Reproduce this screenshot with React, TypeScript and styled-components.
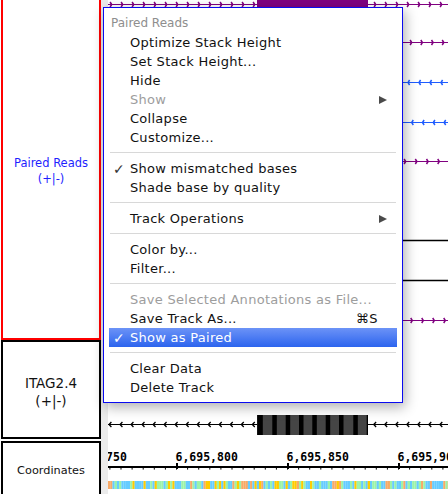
import styled, { createGlobalStyle } from "styled-components";

const GlobalStyle = createGlobalStyle`
  html, body {
    margin: 0;
    padding: 0;
    background: #fff;
    overflow: hidden;
  }
  body {
    font-family: "DejaVu Sans", "Liberation Sans", sans-serif;
  }
`;

const Screen = styled.div`
  position: relative;
  display: flex;
  width: 448px;
  height: 494px;
  overflow: hidden;
  background: #fff;
`;

const NamePanel = styled.div`
  display: flex;
  flex-direction: column;
  flex-shrink: 0;
  width: 100px;
  padding-left: 1px;
`;

const NameBox = styled.div<{ $color: string; $height: number; $open?: boolean; $gap?: number; $shift?: number }>`
  display: flex;
  flex-direction: column;
  align-items: center;
  justify-content: center;
  flex-shrink: 0;
  box-sizing: border-box;
  height: ${p => p.$height}px;
  margin-bottom: ${p => p.$gap ?? 0}px;
  padding-top: ${p => p.$shift ?? 0}px;
  border: 2px solid ${p => p.$color};
  border-top-width: ${p => (p.$open ? 0 : 2)}px;
`;

const TrackName = styled.div<{ $size: number; $color?: string; $lh: number }>`
  font-size: ${p => p.$size}px;
  line-height: ${p => p.$lh}px;
  color: ${p => p.$color ?? "#111"};
  text-align: center;
  white-space: nowrap;
`;

const Gutter = styled.div`
  flex-shrink: 0;
  width: 7px;
  background: #ebebeb;
`;

const DataPanel = styled.div`
  display: flex;
  flex-direction: column;
  flex: 1;
  overflow: hidden;
`;

const TrackCanvas = styled.svg<{ $h: number; $top?: number }>`
  display: block;
  flex-shrink: 0;
  width: 340px;
  height: ${p => p.$h}px;
  margin-top: ${p => p.$top ?? 0}px;
  overflow: hidden;
`;

const Menu = styled.div`
  position: absolute;
  left: 103px;
  top: 7px;
  width: 300px;
  box-sizing: border-box;
  padding: 6px 0 5px;
  border: 1px solid #0a0af0;
  background: #fff;
  box-shadow: 2px 4px 12px rgba(0, 0, 0, 0.32);
`;

const MenuHeader = styled.div`
  height: 19px;
  line-height: 19px;
  padding-left: 7px;
  font-size: 12px;
  color: #8e8e8e;
`;

const MenuItem = styled.div<{ $disabled?: boolean; $active?: boolean }>`
  display: flex;
  align-items: center;
  height: 19px;
  margin: 0 5px;
  padding-right: 10px;
  font-size: 13px;
  letter-spacing: 0.28px;
  white-space: nowrap;
  color: ${p => (p.$active ? "#fff" : p.$disabled ? "#9d9d9d" : "#111")};
  background: ${p => (p.$active ? "linear-gradient(#6c93f7, #2c64ee)" : "transparent")};
`;

const CheckSlot = styled.span<{ $active?: boolean }>`
  flex-shrink: 0;
  box-sizing: border-box;
  width: 21px;
  padding-left: 4px;
  font-size: 14px;
  font-weight: bold;
  color: ${p => (p.$active ? "#fff" : "#333")};
`;

const Shortcut = styled.span`
  margin-left: auto;
  margin-right: 9px;
  letter-spacing: 0.5px;
`;

const SubArrow = styled.span`
  margin-left: auto;
  width: 0;
  height: 0;
  border-left: 8px solid #4a4a4a;
  border-top: 4.5px solid transparent;
  border-bottom: 4.5px solid transparent;
`;

const Separator = styled.div`
  height: 1px;
  margin: 5px 6px 6px;
  background: #d8d8d8;
`;

type Entry =
  | { sep: true }
  | { label: string; check?: boolean; disabled?: boolean; sub?: boolean; key?: string; active?: boolean };

const entries: Entry[] = [
  { label: "Optimize Stack Height" },
  { label: "Set Stack Height..." },
  { label: "Hide" },
  { label: "Show", disabled: true, sub: true },
  { label: "Collapse" },
  { label: "Customize..." },
  { sep: true },
  { label: "Show mismatched bases", check: true },
  { label: "Shade base by quality" },
  { sep: true },
  { label: "Track Operations", sub: true },
  { sep: true },
  { label: "Color by..." },
  { label: "Filter..." },
  { sep: true },
  { label: "Save Selected Annotations as File...", disabled: true },
  { label: "Save Track As...", key: "⌘S" },
  { label: "Show as Paired", check: true, active: true },
  { sep: true },
  { label: "Clear Data" },
  { label: "Delete Track" },
];

const PURPLE = "#800080";
const BLUE = "#1f5cff";

type Read = { y: number; color: string; dir?: "left" | "right"; anchor?: number; step?: number };

const reads: Read[] = [
  { y: 4, color: PURPLE, dir: "right", anchor: 3.7, step: 11 },
  { y: 42, color: PURPLE, dir: "right", anchor: 303.7, step: 10.7 },
  { y: 82, color: BLUE, dir: "left", anchor: 300, step: 11 },
  { y: 122, color: BLUE, dir: "left", anchor: 303.7, step: 10.8 },
  { y: 161, color: PURPLE, dir: "right", anchor: 297.7, step: 11.2 },
  { y: 240, color: "#000" },
  { y: 280, color: "#000" },
  { y: 320, color: PURPLE, dir: "right", anchor: 304.3, step: 11 },
];

function chevronXs(anchor: number, step: number, width: number) {
  const xs: number[] = [];
  let x = anchor;
  while (x - step > 0) x -= step;
  for (; x < width + 4; x += step) xs.push(x);
  return xs;
}

function ArrowLine({ y, color, dir, anchor = 0, step = 11 }: Read) {
  return (
    <g>
      <line x1={0} x2={340} y1={y + 0.5} y2={y + 0.5} stroke={color} strokeWidth={dir ? 1 : 1.6} />
      {dir &&
        chevronXs(anchor, step, 340).map(x => {
          const d = dir === "right" ? -1.6 : 1.6;
          return (
            <polyline
              key={x}
              points={`${x + d},${y - 2} ${x},${y + 0.5} ${x + d},${y + 3}`}
              fill="none"
              stroke={color}
              strokeWidth={1.5}
            />
          );
        })}
    </g>
  );
}

// exon blocks of the gene (black edges over dark grey fill)
const exonEdges = [149.3, 164.3, 177.7, 191, 204.3, 217.7, 231, 245.3, 258.7];

const ticks = [-43, 68, 179, 290];
const labels = ["6,695,750", "6,695,800", "6,695,850", "6,695,900"];

const BASE_COLORS = ["#66ccff", "#9cf3a8", "#f7aa68", "#ffcc00"];
const sequence = (() => {
  let seed = 20240917;
  const out: string[] = [];
  for (let i = 0; i < 154; i++) {
    seed = (seed * 1103515245 + 12345) & 0x7fffffff;
    const r = (seed >> 8) % 100;
    out.push(r < 36 ? BASE_COLORS[0] : r < 66 ? BASE_COLORS[1] : r < 87 ? BASE_COLORS[2] : BASE_COLORS[3]);
  }
  return out;
})();

function App() {
  const minor: number[] = [];
  for (let x = -43; x < 345; x += 11.1) minor.push(x);

  return (
    <>
      <GlobalStyle />
      <Screen>
        <NamePanel>
          <NameBox $color="#ff0000" $height={340} $open $shift={4}>
            <TrackName $size={11.5} $lh={16} $color="#1f1fff">Paired Reads</TrackName>
            <TrackName $size={11.5} $lh={16} $color="#1f1fff">(+|-)</TrackName>
          </NameBox>
          <NameBox $color="#000" $height={99} $gap={2} $shift={4}>
            <TrackName $size={13.5} $lh={18}>ITAG2.4</TrackName>
            <TrackName $size={13.5} $lh={18}>(+|-)</TrackName>
          </NameBox>
          <NameBox $color="#000" $height={60}>
            <TrackName $size={11.3} $lh={16}>Coordinates</TrackName>
          </NameBox>
        </NamePanel>
        <Gutter />
        <DataPanel>
          <TrackCanvas $h={340} viewBox="0 0 340 340">
            {reads.map(r => (
              <ArrowLine key={r.y} {...r} />
            ))}
            <rect x={149} y={0} width={111} height={7} fill={PURPLE} />
          </TrackCanvas>
          <TrackCanvas $h={100} viewBox="0 0 340 100">
            <line x1={0} x2={340} y1={84.5} y2={84.5} stroke="#000" strokeWidth={1} />
            {chevronXs(1, 11.03, 340).map(x => (
              <polyline
                key={x}
                points={`${x + 2.4},${82} ${x},${84.5} ${x + 2.4},${87}`}
                fill="none"
                stroke="#000"
                strokeWidth={1.3}
              />
            ))}
            <rect x={149} y={75} width={111} height={20} fill="#454545" />
            {exonEdges.map((x, i) => (
              <rect key={x} x={x} y={75} width={i === 0 ? 5.5 : i === exonEdges.length - 1 ? 1.3 : 4.5} height={20} fill="#000" />
            ))}
          </TrackCanvas>
          <TrackCanvas $h={38} viewBox="0 0 340 38">
            {labels.map((l, i) => (
              <text
                key={l}
                x={ticks[i] - 0.5}
                y={21}
                fontFamily="'DejaVu Sans Mono', 'Liberation Mono', monospace"
                fontWeight="bold"
                fontSize={11.5}
                fill="#000"
              >
                {l}
              </text>
            ))}
            <rect x={0} y={26} width={340} height={2} fill="#000" />
            {minor.map(x => (
              <rect key={x} x={x} y={28} width={1} height={1.6} fill="#000" />
            ))}
            {ticks.map(x => (
              <rect key={x} x={x} y={23} width={2} height={6} fill="#000" />
            ))}
          </TrackCanvas>
          <TrackCanvas $h={8} $top={3} viewBox="0 0 340 8" preserveAspectRatio="none">
            {sequence.map((c, i) => (
              <rect key={i} x={i * 2.22} y={0} width={2.3} height={8} fill={c} />
            ))}
          </TrackCanvas>
        </DataPanel>

        <Menu>
          <MenuHeader>Paired Reads</MenuHeader>
          {entries.map((e, i) =>
            "sep" in e ? (
              <Separator key={i} />
            ) : (
              <MenuItem key={i} $disabled={e.disabled} $active={e.active}>
                <CheckSlot $active={e.active}>{e.check ? "✓" : ""}</CheckSlot>
                {e.label}
                {e.key && <Shortcut>{e.key}</Shortcut>}
                {e.sub && <SubArrow />}
              </MenuItem>
            )
          )}
        </Menu>
      </Screen>
    </>
  );
}

export default App;
